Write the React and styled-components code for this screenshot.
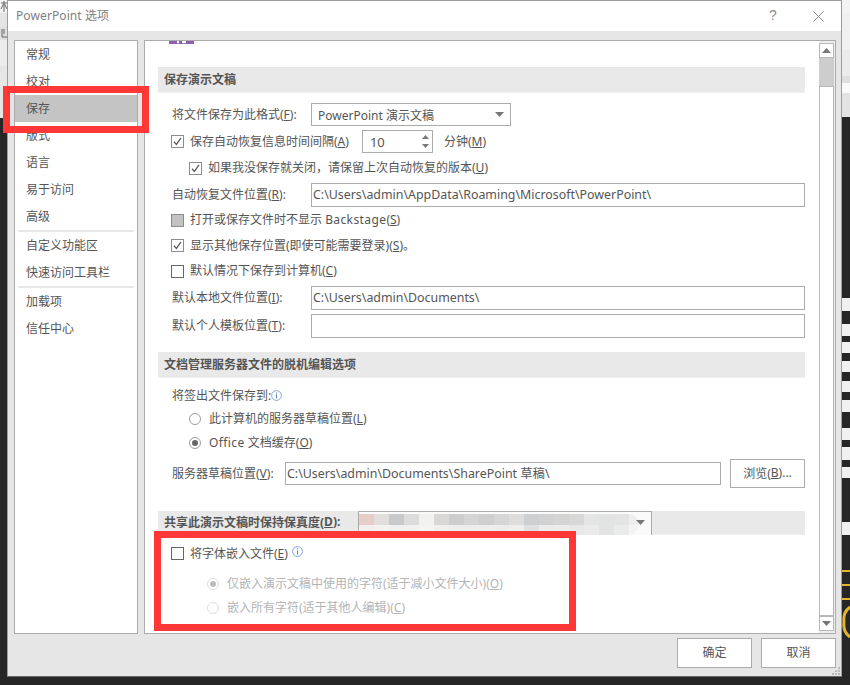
import React from "react";
import styled, { createGlobalStyle } from "styled-components";

const Global = createGlobalStyle`
  html, body { margin: 0; padding: 0; background: #262626; }
  * { box-sizing: border-box; }
  body { font-family: "Noto Sans", "Noto Sans CJK SC", sans-serif; font-size: 12px; color: #555; }
`;

const Page = styled.div`
  position: relative; width: 850px; height: 685px; overflow: hidden;
  display: flex; align-items: flex-start; background: #262626;
`;
const Backdrop = styled.div`
  flex: none; width: ${p => p.$w}px; height: 685px; display: flex; flex-direction: column; overflow: hidden;
`;
const Strip = styled.div`
  flex: none; height: ${p => p.$h}px; background: ${p => p.$c}; overflow: hidden;
`;
const Fragment = styled.svg`display: block;`;
const Ring = styled.svg`flex: none; display: block;`;

const Dialog = styled.div`
  position: relative; flex: none; width: 835px; height: 677px; display: flex; flex-direction: column;
  background: #e6e6e6; border: 1px solid #9c9c9c; border-bottom-color: #666;
`;
const TitleBar = styled.div`
  flex: none; height: 30px; background: #fff; display: flex; align-items: center; padding: 0 17px 0 8px; color: #808080; font-size: 12px;
`;
const TitleText = styled.div`flex: 1; letter-spacing: 0.1px; padding-bottom: 2px;`;
const Help = styled.div`width: 44px; font-size: 14px; color: #909090; font-family: "Liberation Sans", sans-serif; line-height: 1; padding-bottom: 2px;`;
const Body = styled.div`flex: none; display: flex; gap: 6px; height: 603px; padding: 9px 5px 0 6px;`;

const Sidebar = styled.nav`flex: none; width: 124px; background: #fff; border: 1px solid #ababab;`;
const NavItem = styled.div`
  height: 27px; display: flex; align-items: center; padding: 0 0 2px 11px; color: #555;
  background: ${p => (p.$active ? "#c4c4c4" : "transparent")};
`;
const NavRule = styled.div`height: 2px; margin: 0 3px; background: #e8e8e8;`;

const Main = styled.div`flex: 1; display: flex; background: #fff; border: 1px solid #ababab; min-width: 0;`;
const Content = styled.div`flex: 1; padding: 0 14px 0 13px; min-width: 0; overflow: hidden;`;
const Sliver = styled.svg`display: block; margin: 0 0 23px 11px;`;
const SectionHead = styled.div`
  height: ${p => p.$h || 26}px; margin-top: ${p => p.$mt || 0}px; margin-bottom: ${p => p.$mb || 0}px;
  display: flex; align-items: center; padding: 0 0 2px 6px; background: #e9e9e9; border-bottom: 1px solid #efefef;
  font-weight: 700; color: #555;
`;
const Row = styled.div`
  height: ${p => p.$h}px; margin-top: ${p => p.$mt || 0}px; padding-left: ${p => p.$pl ?? 13}px;
  display: flex; align-items: center;
`;
const FieldLabel = styled.div`flex: none; width: ${p => p.$w}px; padding: 0 0 2px 1px; color: #555; white-space: nowrap;`;
const Text = styled.span`color: ${p => (p.$dim ? "#b4b4b4" : "#555")}; white-space: nowrap; padding-bottom: 2px;`;
const Latin = styled.span`letter-spacing: 0.4px;`;
const Key = styled.span`text-decoration: underline; text-underline-offset: 1px;`;
const Box = styled.div`
  flex: none; width: 13px; height: 13px; margin-right: 6px; display: flex; align-items: center; justify-content: center;
  border: 1px solid ${p => (p.$plain ? "#666" : "#8c8c8c")}; background: ${p => (p.$fill ? "#c2c2c2" : "#fff")};
`;
const Circle = styled.div`
  flex: none; width: 12px; height: 12px; margin-right: 8px; border-radius: 50%; display: flex; align-items: center; justify-content: center;
  border: 1px solid ${p => (p.$dim ? "#dcdcdc" : "#9c9c9c")}; background: #fff;
  &::after { content: ""; width: 6px; height: 6px; border-radius: 50%; background: ${p => (p.$on ? (p.$dim ? "#bcbcbc" : "#666") : "transparent")}; }
`;
const TextField = styled.div`
  flex: 1; height: ${p => p.$h || 24}px; border: 1px solid #ababab; background: #fff; padding: 0 0 2px 1px; display: flex; align-items: center;
  font-size: 12.4px; color: #555; white-space: nowrap; min-width: 0;
`;
const Combo = styled.div`
  flex: none; width: ${p => p.$w}px; height: 23px; border: 1px solid #ababab; background: #fff; padding: 0 6px 0 6px; display: flex; align-items: center; justify-content: space-between; color: #555;
`;
const Spin = styled.div`
  flex: none; width: 71px; height: 23px; margin: 0 11px 0 ${p => p.$ml}px; border: 1px solid #ababab; display: flex; align-items: center; justify-content: space-between; padding: 0 3px 0 7px; font-size: 13px;
`;
const SpinArrows = styled.div`display: flex; flex-direction: column; gap: 5px;`;
const Arrow = styled.svg`display: block; flex: none;`;
const BrowseButton = styled.div`
  flex: none; width: 75px; height: 29px; margin-left: 9px; border: 1px solid #ababab; background: #fff; display: flex; align-items: center; justify-content: center; color: #555; padding-bottom: 2px;
`;
const InfoIcon = styled.svg`flex: none; display: block; margin: ${p => p.$m};`;

const Scrollbar = styled.div`flex: none; width: 16px; padding: 2px 1px 2px 0; background: #ededed; display: flex; flex-direction: column;`;
const ScrollButton = styled.div`flex: none; height: 15px; background: #fff; border: 1px solid #b8b8b8; display: flex; align-items: center; justify-content: center;`;
const Thumb = styled.div`flex: none; height: 28px; background: #cdcdcd;`;
const Track = styled.div`flex: 1; background: #fff; border: 1px solid #b8b8b8;`;

const Footer = styled.div`flex: none; display: flex; justify-content: flex-end; gap: 9px; padding: 4px 5px 0 0;`;
const FooterButton = styled.div`
  width: 75px; height: 30px; background: #fff; border: 1px solid #ababab; display: flex; align-items: center; justify-content: center; color: #555; padding-bottom: 2px;
`;
const Grip = styled.svg`position: absolute; right: 0; bottom: 0; display: block;`;

const ShareCombo = styled.div`
  position: relative; flex: none; width: 294px; height: 24px; margin: 0 153px 0 auto; background: #fafafa; border: 1px solid #ababab; border-bottom: 0; overflow: hidden; align-self: flex-start;
`;
const MosaicWrap = styled.div`width: 279px; margin-top: 2px; border-radius: 0 9px 9px 9px; overflow: hidden;`;
const Mosaic = styled.div`display: flex;`;
const Tile = styled.div`flex: none; width: 15px; height: ${p => p.$h}px; background: ${p => p.$c};`;
const ShareArrow = styled.div`position: absolute; right: 6px; top: 8px;`;

const RedMark = styled.div`
  position: absolute; left: ${p => p.$x}px; top: ${p => p.$y}px; width: ${p => p.$w}px; height: ${p => p.$h}px;
  border: 7px solid #ff3737; pointer-events: none;
`;

const nav = [["常规"], ["校对"], ["保存", 1], ["版式"], ["语言"], ["易于访问"], ["高级"], 0, ["自定义功能区"], ["快速访问工具栏"], 0, ["加载项"], ["信任中心"]];
const leftStrips = [[13, "#f4f4f4", "M1 3H7 M4 1V12 M1 9L3.5 4 M7 9L4.5 4"], [14, "#e4e4e4"], [13, "#dedede", "M2 2V10H7 M4 2V7"], [26, "#ececec"], [52, "#e6e6e6"]];
const rightStrips = [[13, "#f3f3f3"], [37, "#f0f0f0"], [26, "#ebebeb"], [7, "#dfdfdf"], [10, "#fafafa"], [24, "#e3e3e3"], [181, "#262626"],
  [13, "#f0f0f0"], [13, "#262626"], [12, "#f0f0f0"], [6, "#262626"], [11, "#f0f0f0"], [8, "#262626"], [11, "#f0f0f0"], [9, "#262626"], [11, "#f0f0f0"], [8, "#262626"], [12, "#f0f0f0"], [16, "#262626"], [12, "#f0f0f0"], [7, "#262626"], [13, "#f0f0f0"], [7, "#262626"], [11, "#f0f0f0"], [44, "#262626"], [13, "#f0f0f0"], [35, "#262626"], [2, "#e2b52e"], [12, "#262626"], [2, "#e2b52e"], [12, "#262626"], [2, "#e2b52e"], [6, "#262626"]];
const tilesA = ["#e8ccc8", "#e0dfdd", "#c8c9cb", "#dcdcdc", "#f2f2f0", "#d9d8d6", "#cccdcc", "#d5d5d5", "#cfcfcf", "#d6d6d6", "#dfdddb", "#cdcfd1", "#d2d2d2", "#d4d4d3", "#d8d8d8", "#e4e5e7", "#e2e3e3", "#e4e4e4", "#eeeeee"];
const tilesB = ["#f3efee", "#f2f2f1", "#f0f0f0", "#f1f1f1", "#f4f4f3", "#efefee", "#ededed", "#ededed", "#ededed", "#ececec", "#eeeeee", "#dfe0e1", "#ececec", "#ececec", "#e8e8e8", "#ebebeb", "#e3e3e3", "#eaebeb", "#f4f4f4"];

const Check = () => (
  <svg width="11" height="11" viewBox="0 0 11 11"><path d="M2 5.8 L4.4 8.4 L9 1.8" fill="none" stroke="#5c5c5c" strokeWidth="1.3" /></svg>
);
const Info = ({ m }) => (
  <InfoIcon $m={m} width="11" height="11" viewBox="0 0 11 11">
    <circle cx="5.5" cy="5.5" r="4.9" fill="#fff" stroke="#7fa6d8" />
    <rect x="5" y="2.4" width="1" height="1" fill="#5d7fae" />
    <rect x="5" y="4.4" width="1" height="4" fill="#5d7fae" />
  </InfoIcon>
);
const Tri = ({ up, w = 9, h = 5, c = "#777" }) => (
  <Arrow width={w} height={h} viewBox="0 0 9 5"><path d={up ? "M4.5 0 L9 5 L0 5 Z" : "M0 0 L9 0 L4.5 5 Z"} fill={c} /></Arrow>
);

export default function App() {
  return (
    <Page>
      <Global />
      <Backdrop $w={7}>
        {leftStrips.map(([h, c, d], i) => (
          <Strip key={i} $h={h} $c={c}>
            {d && <Fragment width="7" height={h} viewBox={`0 0 7 ${h}`}><path d={d} fill="none" stroke="#666" /></Fragment>}
          </Strip>
        ))}
      </Backdrop>
      <Dialog>
        <TitleBar>
          <TitleText>PowerPoint 选项</TitleText>
          <Help>?</Help>
          <svg width="11" height="11" viewBox="0 0 11 11"><path d="M0.5 0.5 L10.5 10.5 M10.5 0.5 L0.5 10.5" stroke="#8a8a8a" strokeWidth="1" fill="none" /></svg>
        </TitleBar>
        <Body>
          <Sidebar>
            {nav.map((n, i) => n ? <NavItem key={i} $active={n[1]}>{n[0]}</NavItem> : <NavRule key={i} />)}
          </Sidebar>
          <Main>
            <Content>
              <Sliver width="25" height="3" viewBox="0 0 25 3"><path d="M0 0H8V3H0Z M10 0H13V3H10Z M17 0H25V3H17Z" fill="#8d5fb5" /><rect y="2" width="25" height="1" fill="#8d5fb5" opacity=".8" /></Sliver>
              <SectionHead $mb={10}>保存演示文稿</SectionHead>
              <Row $h={23}>
                <FieldLabel $w={140}>将文件保存为此格式(<Key>F</Key>):</FieldLabel>
                <Combo $w={200}><span>PowerPoint 演示文稿</span><Tri /></Combo>
              </Row>
              <Row $h={23} $mt={4}>
                <Box><Check /></Box>
                <Text>保存自动恢复信息时间间隔(<Key>A</Key>)</Text>
                <Spin $ml={13}>10<SpinArrows><Tri up w={7} h={4} /><Tri w={7} h={4} /></SpinArrows></Spin>
                <Text>分钟(<Key>M</Key>)</Text>
              </Row>
              <Row $h={30} $pl={31}>
                <Box><Check /></Box>
                <Text>如果我没保存就关闭，请保留上次自动恢复的版本(<Key>U</Key>)</Text>
              </Row>
              <Row $h={24}>
                <FieldLabel $w={140}>自动恢复文件位置(<Key>R</Key>):</FieldLabel>
                <TextField>C:\Users\admin\AppData\Roaming\Microsoft\PowerPoint\</TextField>
              </Row>
              <Row $h={26}>
                <Box $fill />
                <Text>打开或保存文件时不显示 <Latin>Backstage</Latin>(<Key>S</Key>)</Text>
              </Row>
              <Row $h={25}>
                <Box><Check /></Box>
                <Text>显示其他保存位置(即使可能需要登录)(<Key>S</Key>)。</Text>
              </Row>
              <Row $h={26}>
                <Box $plain />
                <Text>默认情况下保存到计算机(<Key>C</Key>)</Text>
              </Row>
              <Row $h={24} $mt={2}>
                <FieldLabel $w={140}>默认本地文件位置(<Key>I</Key>):</FieldLabel>
                <TextField>C:\Users\admin\Documents\</TextField>
              </Row>
              <Row $h={24} $mt={4}>
                <FieldLabel $w={140}>默认个人模板位置(<Key>T</Key>):</FieldLabel>
                <TextField />
              </Row>
              <SectionHead $mt={14}>文档管理服务器文件的脱机编辑选项</SectionHead>
              <Row $h={22} $mt={7}>
                <FieldLabel $w="auto">将签出文件保存到:</FieldLabel>
                <Info m="-2px 0 0 0" />
              </Row>
              <Row $h={24} $pl={31}>
                <Circle />
                <Text>此计算机的服务器草稿位置(<Key>L</Key>)</Text>
              </Row>
              <Row $h={24} $pl={31}>
                <Circle $on />
                <Text><Latin>Office</Latin> 文档缓存(<Key>O</Key>)</Text>
              </Row>
              <Row $h={29} $mt={4}>
                <FieldLabel $w={114}>服务器草稿位置(<Key>V</Key>):</FieldLabel>
                <TextField $h={23}>C:\Users\admin\Documents\SharePoint 草稿\</TextField>
                <BrowseButton>浏览(<Key>B</Key>)...</BrowseButton>
              </Row>
              <SectionHead $mt={23} $h={24}>
                共享此演示文稿时保持保真度(<Key>D</Key>):
                <ShareCombo>
                  <MosaicWrap>
                    <Mosaic>{tilesA.map((c, i) => <Tile key={i} $c={c} $h={11} />)}</Mosaic>
                    <Mosaic>{tilesB.map((c, i) => <Tile key={i} $c={c} $h={10} />)}</Mosaic>
                  </MosaicWrap>
                  <ShareArrow><Tri /></ShareArrow>
                </ShareCombo>
              </SectionHead>
              <Row $h={37}>
                <Box $plain />
                <Text>将字体嵌入文件(<Key>E</Key>)</Text>
                <Info m="-4px 0 0 4px" />
              </Row>
              <Row $h={23} $pl={49}>
                <Circle $on $dim />
                <Text $dim>仅嵌入演示文稿中使用的字符(适于减小文件大小)(<Key>O</Key>)</Text>
              </Row>
              <Row $h={26} $pl={49}>
                <Circle $dim />
                <Text $dim>嵌入所有字符(适于其他人编辑)(<Key>C</Key>)</Text>
              </Row>
            </Content>
            <Scrollbar>
              <ScrollButton><Tri up /></ScrollButton>
              <Thumb />
              <Track />
              <ScrollButton><Tri /></ScrollButton>
            </Scrollbar>
          </Main>
        </Body>
        <Footer>
          <FooterButton>确定</FooterButton>
          <FooterButton>取消</FooterButton>
        </Footer>
        <Grip width="9" height="9" viewBox="0 0 9 9">
          <path d="M6 0H8V2H6Z M3 3H5V5H3Z M6 3H8V5H6Z M0 6H2V8H0Z M3 6H5V8H3Z M6 6H8V8H6Z" fill="#b9b9b9" />
        </Grip>
      </Dialog>
      <Backdrop $w={8}>
        {rightStrips.map(([h, c], i) => <Strip key={i} $h={h} $c={c} />)}
        <Ring width="8" height="32" viewBox="0 0 8 32"><path d="M8 1 A13 15 0 0 0 2 16 A13 15 0 0 0 8 31" fill="none" stroke="#e2b52e" strokeWidth="3" /></Ring>
      </Backdrop>
      <RedMark $x={3} $y={86} $w={146} $h={47} />
      <RedMark $x={154} $y={531} $w={422} $h={100} />
    </Page>
  );
}
